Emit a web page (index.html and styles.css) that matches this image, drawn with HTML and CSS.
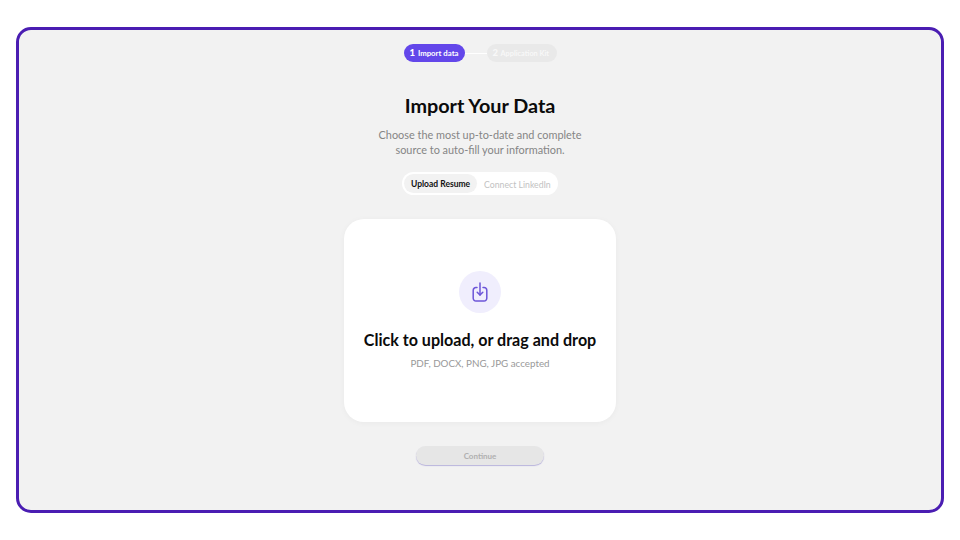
FILE: index.html
```html
<!DOCTYPE html>
<html lang="en">
<head>
    <meta charset="UTF-8">
    <meta name="viewport" content="width=device-width, initial-scale=1.0">
    <title>Import Your Data</title>
    <link rel="stylesheet" href="styles.css">
</head>
<body>
    <div class="frame">
        <!-- Stepper -->
        <div class="stepper">
            <div class="step step-active"><b>1</b> Import data</div>
            <div class="step-line"></div>
            <div class="step step-next"><b>2</b> Application Kit</div>
        </div>

        <h1 class="title">Import Your Data</h1>
        <p class="subtitle">Choose the most up-to-date and complete<br>source to auto-fill your information.</p>

        <!-- Source tabs -->
        <div class="tabs">
            <div class="tab tab-active">Upload Resume</div>
            <div class="tab">Connect LinkedIn</div>
        </div>

        <!-- Upload card -->
        <div class="upload-card">
            <div class="upload-icon">
                <svg width="18" height="20" viewBox="0 0 18 20" fill="none" stroke="#6c55d8" stroke-width="1.5" stroke-linecap="round" stroke-linejoin="round">
                    <path d="M6 5.6H4.9A2.7 2.7 0 0 0 2.2 8.3v8A2.7 2.7 0 0 0 4.9 19h8.2a2.7 2.7 0 0 0 2.7-2.7v-8a2.7 2.7 0 0 0-2.7-2.7H12"/>
                    <path d="M9 1v12"/>
                    <path d="M6.2 10.2L9 13l2.8-2.8"/>
                </svg>
            </div>
            <div class="upload-title">Click to upload, or drag and drop</div>
            <div class="upload-note">PDF, DOCX, PNG, JPG accepted</div>
        </div>

        <button class="continue">Continue</button>
    </div>
</body>
</html>
```
FILE: styles.css
```css
* {
    box-sizing: border-box;
}
body {
    margin: 0;
    width: 960px;
    height: 540px;
    background-color: #fff;
    padding: 27px 16px;
    font-family: "Lato", "Open Sans", sans-serif;
    overflow: hidden;
}
.frame {
    height: 486px;
    border: 3px solid #4a1db2;
    border-radius: 15px;
    background-color: #f2f2f2;
    display: flex;
    flex-direction: column;
    align-items: center;
    padding-top: 14px;
}

/* Stepper */
.stepper {
    display: flex;
    align-items: center;
    height: 18px;
}
.step {
    height: 18px;
    border-radius: 9px;
    padding: 0 6px;
    font-weight: 700;
    line-height: 18px;
    white-space: nowrap;
}
.step b {
    font-size: 9.5px;
    margin-right: 1px;
}
.step-active {
    width: 61px;
    background-color: #6347ea;
    color: #fff;
    font-size: 7.8px;
}
.step-next {
    width: 70px;
    background-color: #e9e9e9;
    color: #f8f8f8;
    font-size: 7.3px;
}
.step-line {
    width: 22px;
    height: 1px;
    background-color: #fff;
}

.title {
    margin: 31px 0 0;
    font-size: 19.8px;
    line-height: 24px;
    font-weight: 700;
    color: #0b0b0b;
}
.subtitle {
    margin: 10px 0 0;
    font-size: 10.9px;
    line-height: 15px;
    color: #858585;
    text-align: center;
}

/* Tabs */
.tabs {
    margin-top: 15px;
    width: 156px;
    height: 23px;
    padding: 2px;
    display: flex;
    justify-content: space-between;
    background-color: #fff;
    border-radius: 12px;
}
.tab {
    padding: 1px 7px 0;
    font-size: 8.7px;
    line-height: 19px;
    color: #c2c2c2;
    border-radius: 10px;
    white-space: nowrap;
}
.tab-active {
    background-color: #f2f2f2;
    color: #111;
    font-size: 8.5px;
    font-weight: 700;
}

/* Upload card */
.upload-card {
    margin-top: 24px;
    width: 272px;
    height: 203px;
    background-color: #fff;
    border-radius: 20px;
    box-shadow: 0 1px 6px rgba(0, 0, 0, 0.04);
    display: flex;
    flex-direction: column;
    align-items: center;
    padding-top: 52px;
}
.upload-icon {
    width: 42px;
    height: 42px;
    border-radius: 50%;
    background-color: #f0eefd;
    display: flex;
    align-items: center;
    justify-content: center;
}
.upload-title {
    margin-top: 16px;
    font-size: 16.1px;
    line-height: 22px;
    font-weight: 700;
    color: #0b0b0b;
}
.upload-note {
    margin-top: 5px;
    font-size: 9.8px;
    line-height: 14px;
    color: #999;
}

.continue {
    margin-top: 24px;
    width: 128px;
    height: 19px;
    border: none;
    border-radius: 10px;
    background-color: #e6e6e6;
    box-shadow: 0 1px 1px #b9b4dc;
    color: #b0b0b0;
    font-family: inherit;
    font-size: 8px;
    font-weight: 700;
}
```
